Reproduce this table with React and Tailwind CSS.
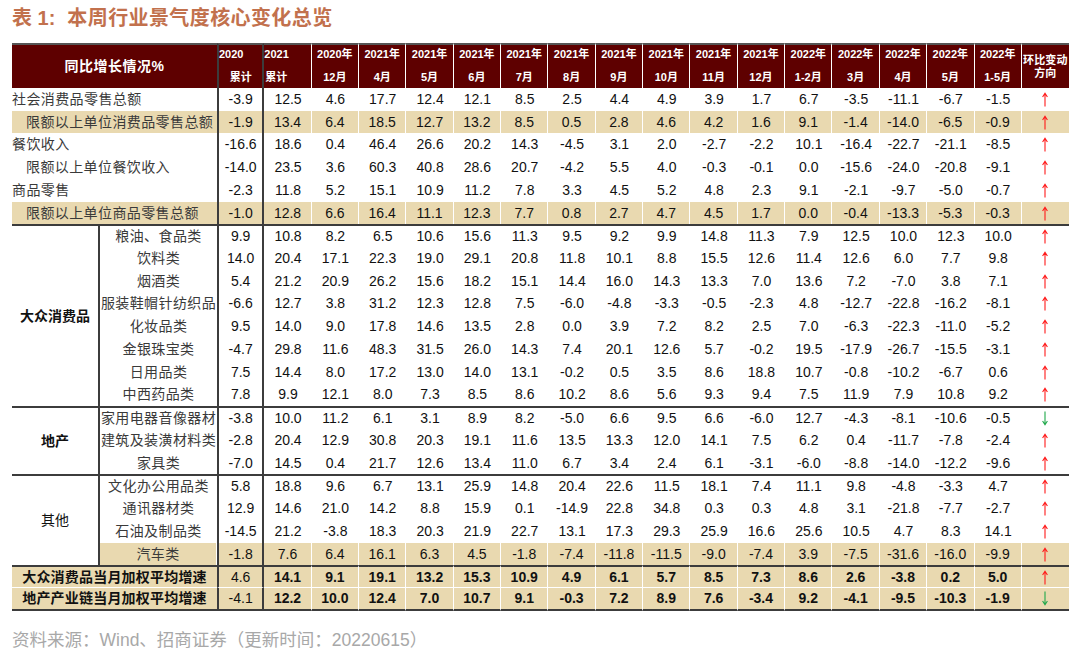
import React from "react";

const DARK = "border-[#3c3c3c]";
const HL = "bg-[#e9d9b0]";

const heads = [
  { t: "2020", b: "累计", kind: "a" },
  { t: "2021", b: "累计", kind: "b" },
  { t: "2020年", b: "12月" },
  { t: "2021年", b: "4月" },
  { t: "2021年", b: "5月" },
  { t: "2021年", b: "6月" },
  { t: "2021年", b: "7月" },
  { t: "2021年", b: "8月" },
  { t: "2021年", b: "9月" },
  { t: "2021年", b: "10月" },
  { t: "2021年", b: "11月" },
  { t: "2021年", b: "12月" },
  { t: "2022年", b: "1-2月" },
  { t: "2022年", b: "3月" },
  { t: "2022年", b: "4月" },
  { t: "2022年", b: "5月" },
  { t: "2022年", b: "1-5月" },
];

// kind: top = label spans both label columns, sub = inside a group, sum = bold summary row
const rows = [
  { kind: "top", label: "社会消费品零售总额", v: "-3.9 12.5 4.6 17.7 12.4 12.1 8.5 2.5 4.4 4.9 3.9 1.7 6.7 -3.5 -11.1 -6.7 -1.5", d: "up" },
  { kind: "top", label: "限额以上单位消费品零售总额", indent: true, hl: true, v: "-1.9 13.4 6.4 18.5 12.7 13.2 8.5 0.5 2.8 4.6 4.2 1.6 9.1 -1.4 -14.0 -6.5 -0.9", d: "up" },
  { kind: "top", label: "餐饮收入", v: "-16.6 18.6 0.4 46.4 26.6 20.2 14.3 -4.5 3.1 2.0 -2.7 -2.2 10.1 -16.4 -22.7 -21.1 -8.5", d: "up" },
  { kind: "top", label: "限额以上单位餐饮收入", indent: true, v: "-14.0 23.5 3.6 60.3 40.8 28.6 20.7 -4.2 5.5 4.0 -0.3 -0.1 0.0 -15.6 -24.0 -20.8 -9.1", d: "up" },
  { kind: "top", label: "商品零售", v: "-2.3 11.8 5.2 15.1 10.9 11.2 7.8 3.3 4.5 5.2 4.8 2.3 9.1 -2.1 -9.7 -5.0 -0.7", d: "up" },
  { kind: "top", label: "限额以上单位商品零售总额", indent: true, hl: true, v: "-1.0 12.8 6.6 16.4 11.1 12.3 7.7 0.8 2.7 4.7 4.5 1.7 0.0 -0.4 -13.3 -5.3 -0.3", d: "up" },

  { kind: "sub", group: { name: "大众消费品", span: "row-span-8", bold: true }, line: true, label: "粮油、食品类", v: "9.9 10.8 8.2 6.5 10.6 15.6 11.3 9.5 9.2 9.9 14.8 11.3 7.9 12.5 10.0 12.3 10.0", d: "up" },
  { kind: "sub", label: "饮料类", v: "14.0 20.4 17.1 22.3 19.0 29.1 20.8 11.8 10.1 8.8 15.5 12.6 11.4 12.6 6.0 7.7 9.8", d: "up" },
  { kind: "sub", label: "烟酒类", v: "5.4 21.2 20.9 26.2 15.6 18.2 15.1 14.4 16.0 14.3 13.3 7.0 13.6 7.2 -7.0 3.8 7.1", d: "up" },
  { kind: "sub", label: "服装鞋帽针纺织品", v: "-6.6 12.7 3.8 31.2 12.3 12.8 7.5 -6.0 -4.8 -3.3 -0.5 -2.3 4.8 -12.7 -22.8 -16.2 -8.1", d: "up" },
  { kind: "sub", label: "化妆品类", v: "9.5 14.0 9.0 17.8 14.6 13.5 2.8 0.0 3.9 7.2 8.2 2.5 7.0 -6.3 -22.3 -11.0 -5.2", d: "up" },
  { kind: "sub", label: "金银珠宝类", v: "-4.7 29.8 11.6 48.3 31.5 26.0 14.3 7.4 20.1 12.6 5.7 -0.2 19.5 -17.9 -26.7 -15.5 -3.1", d: "up" },
  { kind: "sub", label: "日用品类", v: "7.5 14.4 8.0 17.2 13.0 14.0 13.1 -0.2 0.5 3.5 8.6 18.8 10.7 -0.8 -10.2 -6.7 0.6", d: "up" },
  { kind: "sub", label: "中西药品类", v: "7.8 9.9 12.1 8.0 7.3 8.5 8.6 10.2 8.6 5.6 9.3 9.4 7.5 11.9 7.9 10.8 9.2", d: "up" },

  { kind: "sub", group: { name: "地产", span: "row-span-3", bold: true }, line: true, label: "家用电器音像器材", v: "-3.8 10.0 11.2 6.1 3.1 8.9 8.2 -5.0 6.6 9.5 6.6 -6.0 12.7 -4.3 -8.1 -10.6 -0.5", d: "down" },
  { kind: "sub", label: "建筑及装潢材料类", v: "-2.8 20.4 12.9 30.8 20.3 19.1 11.6 13.5 13.3 12.0 14.1 7.5 6.2 0.4 -11.7 -7.8 -2.4", d: "up" },
  { kind: "sub", label: "家具类", v: "-7.0 14.5 0.4 21.7 12.6 13.4 11.0 6.7 3.4 2.4 6.1 -3.1 -6.0 -8.8 -14.0 -12.2 -9.6", d: "up" },

  { kind: "sub", group: { name: "其他", span: "row-span-4" }, line: true, label: "文化办公用品类", v: "5.8 18.8 9.6 6.7 13.1 25.9 14.8 20.4 22.6 11.5 18.1 7.4 11.1 9.8 -4.8 -3.3 4.7", d: "up" },
  { kind: "sub", label: "通讯器材类", v: "12.9 14.6 21.0 14.2 8.8 15.9 0.1 -14.9 22.8 34.8 0.3 0.3 4.8 3.1 -21.8 -7.7 -2.7", d: "up" },
  { kind: "sub", label: "石油及制品类", v: "-14.5 21.2 -3.8 18.3 20.3 21.9 22.7 13.1 17.3 29.3 25.9 16.6 25.6 10.5 4.7 8.3 14.1", d: "up" },
  { kind: "sub", label: "汽车类", hl: true, v: "-1.8 7.6 6.4 16.1 6.3 4.5 -1.8 -7.4 -11.8 -11.5 -9.0 -7.4 3.9 -7.5 -31.6 -16.0 -9.9", d: "up" },

  { kind: "sum", line: true, sep: true, label: "大众消费品当月加权平均增速", hl: true, v: "4.6 14.1 9.1 19.1 13.2 15.3 10.9 4.9 6.1 5.7 8.5 7.3 8.6 2.6 -3.8 0.2 5.0", d: "up" },
  { kind: "sum", last: true, label: "地产产业链当月加权平均增速", hl: true, v: "-4.1 12.2 10.0 12.4 7.0 10.7 9.1 -0.3 7.2 8.9 7.6 -3.4 9.2 -4.1 -9.5 -10.3 -1.9", d: "down" },
];

function Arrow({ dir }) {
  const up = dir === "up";
  return (
    <svg width="8" height="15" viewBox="0 0 8 15" className={up ? "text-[#ff1a1a]" : "text-[#1fa84a]"}>
      {up ? (
        <path d="M4 14.5V1.5M1.6 5L4 1.2L6.4 5" fill="none" stroke="currentColor" strokeWidth="1.1" />
      ) : (
        <path d="M4 0.5V13.5M1.6 10L4 13.8L6.4 10" fill="none" stroke="currentColor" strokeWidth="1.1" />
      )}
    </svg>
  );
}

function HeaderRow() {
  const top = `border-t-2 border-t-[#555]`;
  return (
    <>
      <div className={`col-span-2 bg-[#5e0000] ${top} flex items-center justify-center text-white font-bold text-[14px] tracking-[0.5px]`}>
        同比增长情况%
      </div>
      {heads.map((h, i) => {
        const sideB = i === 0 ? `border-l-2 border-r-2 ${DARK}` : "border-r border-r-white";
        const topAlign = h.kind ? "items-start" : "items-center";
        const botAlign = h.kind === "b" ? "items-start pl-[1px]" : "items-center";
        return (
          <div key={i} className={`bg-[#5e0000] ${top} ${sideB} flex flex-col justify-between pt-[2px] pb-[4px] text-white font-bold text-[11px] leading-[14px]`}>
            <div className={`flex flex-col ${topAlign}`}>{h.t}</div>
            <div className={`flex flex-col ${botAlign}`}>{h.b}</div>
          </div>
        );
      })}
      <div className={`bg-[#5e0000] ${top} flex flex-col items-center justify-center text-white font-bold text-[11px] leading-[13px] tracking-[0.2px]`}>
        <span>环比变动</span>
        <span>方向</span>
      </div>
    </>
  );
}

function BodyRow({ row }) {
  const vals = row.v.split(" ");
  const lineT = row.line ? "border-t-2 border-t-[#3c3c3c]" : "";
  const lineB = row.last ? "border-b-2 border-b-[#3c3c3c]" : row.sep ? "border-b border-b-white" : "";
  const bg = row.hl ? HL : "";
  const cells = [];

  if (row.kind === "top") {
    cells.push(
      <div key="l" className={`col-span-2 flex items-center ${row.indent ? "pl-[14px]" : ""} ${bg} ${lineT} ${lineB} text-[14px] tracking-[0.4px] text-[#3a3a3a]`}>
        {row.label}
      </div>
    );
  } else if (row.kind === "sum") {
    cells.push(
      <div key="l" className={`col-span-2 flex items-center justify-center ${bg} ${lineT} ${lineB} text-[14px] font-bold tracking-[0.2px] text-[#111]`}>
        {row.label}
      </div>
    );
  } else {
    if (row.group) {
      cells.push(
        <div key="g" className={`${row.group.span} flex items-center justify-center border-r-2 ${DARK} ${lineT} text-[14px] text-[#111] ${row.group.bold ? "font-bold" : ""}`}>
          {row.group.name}
        </div>
      );
    }
    cells.push(
      <div key="l" className={`flex items-center justify-center whitespace-nowrap ${bg} ${row.hl ? "border-r border-r-white" : ""} ${lineT} ${lineB} text-[14px] tracking-[0.4px] text-[#3a3a3a]`}>
        {row.label}
      </div>
    );
  }

  vals.forEach((v, i) => {
    const sideB = i === 0 ? `border-l-2 border-r-2 border-l-[#3c3c3c] border-r-[#3c3c3c]` : row.hl ? "border-r border-r-white" : "";
    const weight = row.kind === "sum" && i > 0 ? "font-bold" : "";
    cells.push(
      <div key={i} className={`flex items-center justify-center ${bg} ${sideB} ${lineT} ${lineB} text-[14px] text-[#111] ${weight}`}>
        {v}
      </div>
    );
  });

  cells.push(
    <div key="d" className={`flex items-center justify-center ${bg} ${lineT} ${lineB}`}>
      <Arrow dir={row.d} />
    </div>
  );

  return <>{cells}</>;
}

export default function App() {
  return (
    <div className="w-[1080px] h-[654px] bg-white overflow-hidden pl-[12px] [font-family:'Liberation_Sans','Noto_Sans_CJK_SC',sans-serif]">
      <div className="h-[43px] pt-[5px] flex items-start text-[20px] leading-[26px] font-bold text-[#c2714d]">
        <span>表 1:</span>
        <span className="ml-[12px] tracking-[0.4px]">本周行业景气度核心变化总览</span>
      </div>

      <div className="grid w-[1057px] grid-cols-[88px_117px_repeat(17,47.35px)_47px] grid-rows-[45px_repeat(23,22.74px)]">
        <HeaderRow />
        {rows.map((r, i) => (
          <BodyRow key={i} row={r} />
        ))}
      </div>

      <div className="mt-[18px] text-[17.5px] leading-[22px] text-[#a8a8a8]">
        资料来源：Wind、招商证券（更新时间：20220615）
      </div>
    </div>
  );
}
